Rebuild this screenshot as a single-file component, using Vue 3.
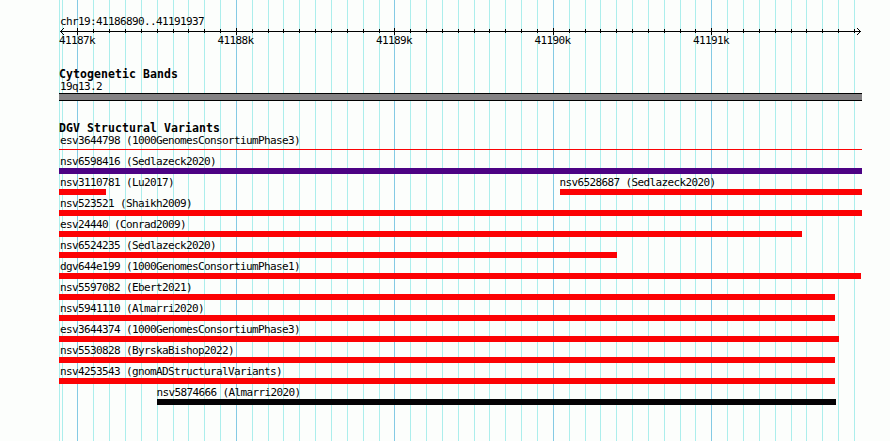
<script setup>
const minor = [
  59, 62, 93, 109, 125, 141, 157, 173, 188, 204, 220, 252, 268, 283, 299, 315, 331, 347, 363, 379,
  410, 426, 442, 458, 474, 489, 505, 521, 537, 569, 585, 600, 616, 632, 648, 664, 680, 695,
  727, 743, 759, 775, 791, 806, 822, 838, 854,
]
const major = [77, 236, 394, 553, 711]
const scale = ['41187k', '41188k', '41189k', '41190k', '41191k']
const LEFT = 59

const rows = [
  [{ name: 'esv3644798 (1000GenomesConsortiumPhase3)', from: 59, to: 862, kind: 'thin' }],
  [{ name: 'nsv6598416 (Sedlazeck2020)', from: 59, to: 862, kind: 'complex' }],
  [
    { name: 'nsv3110781 (Lu2017)', from: 59, to: 106, kind: 'loss' },
    { name: 'nsv6528687 (Sedlazeck2020)', from: 560, to: 862, kind: 'loss' },
  ],
  [{ name: 'nsv523521 (Shaikh2009)', from: 59, to: 862, kind: 'loss' }],
  [{ name: 'esv24440 (Conrad2009)', from: 59, to: 802, kind: 'loss' }],
  [{ name: 'nsv6524235 (Sedlazeck2020)', from: 59, to: 617, kind: 'loss' }],
  [{ name: 'dgv644e199 (1000GenomesConsortiumPhase1)', from: 59, to: 861, kind: 'loss' }],
  [{ name: 'nsv5597082 (Ebert2021)', from: 59, to: 835, kind: 'loss' }],
  [{ name: 'nsv5941110 (Almarri2020)', from: 59, to: 835, kind: 'loss' }],
  [{ name: 'esv3644374 (1000GenomesConsortiumPhase3)', from: 59, to: 839, kind: 'loss' }],
  [{ name: 'nsv5530828 (ByrskaBishop2022)', from: 59, to: 835, kind: 'loss' }],
  [{ name: 'nsv4253543 (gnomADStructuralVariants)', from: 59, to: 835, kind: 'loss' }],
  [{ name: 'nsv5874666 (Almarri2020)', from: 157, to: 836, kind: 'other' }],
]

// Each feature is offset from the end of the one before it in its row.
const gap = (row, i) => row[i].from - (i ? row[i - 1].to : LEFT)
</script>

<template>
  <main class="browser">
    <svg class="grid" width="890" height="441" shape-rendering="crispEdges">
      <rect v-for="x in minor" :key="x" class="minor" :x="x" y="0" width="1" height="441" />
      <rect v-for="x in major" :key="x" class="major" :x="x" y="0" width="1" height="441" />
    </svg>

    <div class="panel">
      <header class="ruler">
        <div class="label region">chr19:41186890..41191937</div>
        <svg class="axis" width="803" height="7" viewBox="59 28 803 7" shape-rendering="crispEdges">
          <rect x="60" y="31" width="801" height="1" />
          <rect v-for="x in minor.slice(2)" :key="x" :x="x" y="29" width="1" height="4" />
          <rect v-for="x in major" :key="x" :x="x" y="28" width="1" height="7" />
          <path d="M61 30h1v1h-1zM62 29h1v1h-1zM63 28h1v1h-1zM61 32h1v1h-1zM62 33h1v1h-1zM63 34h1v1h-1z" />
          <path d="M859 30h1v1h-1zM858 29h1v1h-1zM857 28h1v1h-1zM859 32h1v1h-1zM858 33h1v1h-1zM857 34h1v1h-1z" />
        </svg>
        <div class="scale">
          <span v-for="s in scale" :key="s" class="label">{{ s }}</span>
        </div>
      </header>

      <section class="cyto">
        <h2>Cytogenetic Bands</h2>
        <div class="label">19q13.2</div>
        <div class="band"></div>
      </section>

      <section class="variants">
        <h2>DGV Structural Variants</h2>
        <div v-for="(row, r) in rows" :key="r" class="row">
          <div
            v-for="(f, i) in row"
            :key="f.name"
            class="feature"
            :class="{ inset: f.from > LEFT }"
            :style="{ width: f.to - f.from + 'px', marginLeft: gap(row, i) + 'px' }"
          >
            <div class="label">{{ f.name }}</div>
            <div class="bar" :class="f.kind"></div>
          </div>
        </div>
      </section>
    </div>
  </main>
</template>

<style>
body {
  background: #fcfefc;
}
</style>

<style scoped>
.browser {
  display: grid;
  width: 890px;
  height: 441px;
  overflow: hidden;
  background: #fcfefc;
  color: #000;
  font-family: "DejaVu Sans Mono", "Liberation Mono", monospace;
}
.grid,
.panel {
  grid-area: 1 / 1;
  display: block;
}
.minor {
  fill: #aceeec;
}
.major {
  fill: #84cae4;
}
.panel {
  z-index: 1;
  width: 803px;
  padding: 15px 28px 0 59px;
}
.label {
  height: 12px;
  padding-left: 1px;
  font-size: 11px;
  line-height: 14px;
  letter-spacing: -0.622px;
  white-space: pre;
}
.inset .label {
  padding-left: 0;
  margin-left: -0.5px;
}
.ruler {
  height: 53px;
}
.axis {
  display: block;
  margin-top: 1px;
}
.scale {
  display: flex;
  gap: 122.5px;
  margin-top: -1px;
}
.scale .label {
  width: 36px;
  padding: 0;
  flex: none;
}
h2 {
  height: 12px;
  margin: 0;
  font-size: 11.5px;
  line-height: 13px;
  font-weight: bold;
  letter-spacing: 0.077px;
  white-space: pre;
}
.cyto {
  height: 54px;
}
.band {
  box-sizing: border-box;
  height: 8px;
  margin-top: 1px;
  border: solid #000;
  border-width: 1px 0;
  background: #848284;
}
.row {
  display: flex;
  height: 21px;
}
.feature {
  flex: none;
}
.bar {
  height: 6px;
  margin-top: 1px;
}
.thin {
  height: 1px;
  margin-top: 3px;
  background: #fc0204;
}
.complex {
  background: #4c0284;
}
.loss {
  background: #fc0204;
}
.other {
  background: #040204;
}
</style>
